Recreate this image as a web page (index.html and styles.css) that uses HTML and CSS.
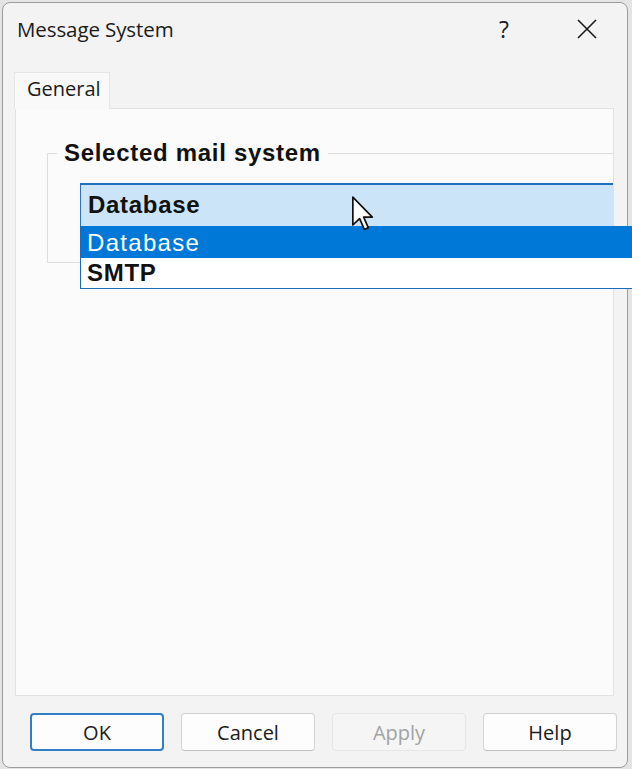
FILE: index.html
```html
<!DOCTYPE html>
<html>
<head>
<meta charset="utf-8">
<link rel="stylesheet" href="styles.css">
</head>
<body>
<div class="window">
  <div class="titlebar">
    <span class="title">Message System</span>
    <span class="tbtn help">?</span>
    <span class="tbtn close">
      <svg width="20" height="20" viewBox="0 0 20 20"><path d="M1 1 L19 19 M19 1 L1 19" stroke="#1a1a1a" stroke-width="1.6" fill="none"/></svg>
    </span>
  </div>
  <div class="tabstrip">
    <div class="tab">General</div>
  </div>
  <div class="panel">
    <fieldset class="group">
      <legend class="group-label">Selected mail system</legend>
      <div class="combo">Database</div>
    </fieldset>
  </div>
  <div class="buttons">
    <div class="btn default">OK</div>
    <div class="btn">Cancel</div>
    <div class="btn disabled">Apply</div>
    <div class="btn">Help</div>
  </div>
</div>
<div class="dropdown">
  <div class="item selected">Database</div>
  <div class="item">SMTP</div>
</div>
<svg class="cursor" width="22" height="36" viewBox="0 0 13 21">
  <path d="M0.5 0.5 L0.5 17 L4.5 13.2 L7.3 19.6 L9.6 18.6 L6.9 12.3 L12 12.3 Z" fill="#ffffff" stroke="#111111" stroke-width="1" stroke-linejoin="round"/>
</svg>
</body>
</html>
```
FILE: styles.css
```css
html, body {
  margin: 0;
  padding: 0;
}
body {
  width: 632px;
  height: 769px;
  overflow: hidden;
  background: #e4e4e4;
  position: relative;
  font-family: "Open Sans", "Liberation Sans", sans-serif;
  color: #1a1a1a;
}
.window {
  box-sizing: border-box;
  margin: 2px 4px 0 2px;
  height: 766px;
  border: 1px solid #9c9c9c;
  border-radius: 8px;
  background: #f3f3f3;
  display: flex;
  flex-direction: column;
  overflow: hidden;
}
.titlebar {
  height: 52px;
  padding-bottom: 2px;
  display: flex;
  align-items: center;
  flex: none;
}
.title {
  padding-left: 14px;
  font-size: 20.5px;
  letter-spacing: -0.1px;
  color: #1b1b1b;
}
.tbtn {
  width: 46px;
  display: flex;
  justify-content: center;
  align-items: center;
  font-size: 23px;
  font-weight: 500;
  color: #1b1b1b;
}
.help {
  margin-left: auto;
}
.close {
  margin-left: 37px;
  margin-right: 17px;
}
.tabstrip {
  flex: none;
  padding-top: 15px;
  padding-left: 11px;
  display: flex;
}
.tab {
  box-sizing: border-box;
  width: 96px;
  height: 37px;
  margin-bottom: -1px;
  background: #f9f9f9;
  border: 1px solid #e6e6e6;
  border-bottom: none;
  padding-left: 12px;
  font-size: 20px;
  line-height: 32px;
  color: #1b1b1b;
  position: relative;
  z-index: 1;
}
.panel {
  flex: none;
  box-sizing: border-box;
  height: 588px;
  margin: 0 13px 0 12px;
  background: #fbfbfb;
  border: 1px solid #e2e2e2;
  overflow: hidden;
}
.group {
  box-sizing: border-box;
  width: 620px;
  min-width: 0;
  margin: 30px 0 0 31px;
  padding: 0 0 36px 0;
  border: 1px solid #dcdcdc;
  border-right: none;
}
.group-label {
  margin-left: 9px;
  padding: 0 7px;
  font-family: "Liberation Sans", Arial, sans-serif;
  font-weight: bold;
  font-size: 24px;
  letter-spacing: 0.7px;
  line-height: 28px;
  color: #111111;
}
.combo {
  box-sizing: border-box;
  margin: 16px 0 0 32px;
  height: 43px;
  width: 600px;
  background: #cce4f7;
  border-top: 2px solid #1f6fbd;
  border-left: 1px solid #2a74bf;
  padding-left: 7px;
  font-family: "Liberation Sans", Arial, sans-serif;
  font-weight: bold;
  font-size: 24px;
  letter-spacing: 0.7px;
  line-height: 40px;
  color: #111111;
}
.buttons {
  flex: none;
  display: flex;
  gap: 17px;
  padding: 17px 0 0 27px;
}
.btn {
  box-sizing: border-box;
  width: 134px;
  height: 38px;
  background: #fdfdfd;
  border: 1px solid #d3d3d3;
  border-bottom-color: #bfbfbf;
  border-radius: 4px;
  display: flex;
  align-items: center;
  justify-content: center;
  font-size: 20px;
  color: #1b1b1b;
}
.btn.default {
  border: 2px solid #2f7ec9;
}
.btn.disabled {
  background: #f5f5f5;
  border-color: #e6e6e6;
  color: #a3a3a3;
}
.dropdown {
  position: absolute;
  left: 80px;
  top: 226px;
  width: 570px;
  box-sizing: border-box;
  border: 1px solid #1c6bbb;
  border-top: none;
  background: #ffffff;
  font-family: "Liberation Sans", Arial, sans-serif;
  font-weight: bold;
  font-size: 24px;
  letter-spacing: 0.7px;
  color: #111111;
}
.item {
  height: 30px;
  line-height: 30px;
  padding-left: 6px;
}
.item.selected {
  height: 32px;
  line-height: 34px;
  background: #0078d7;
  color: #ffffff;
  font-weight: normal;
  letter-spacing: 1.3px;
}
.cursor {
  position: absolute;
  left: 352px;
  top: 196px;
}
```
